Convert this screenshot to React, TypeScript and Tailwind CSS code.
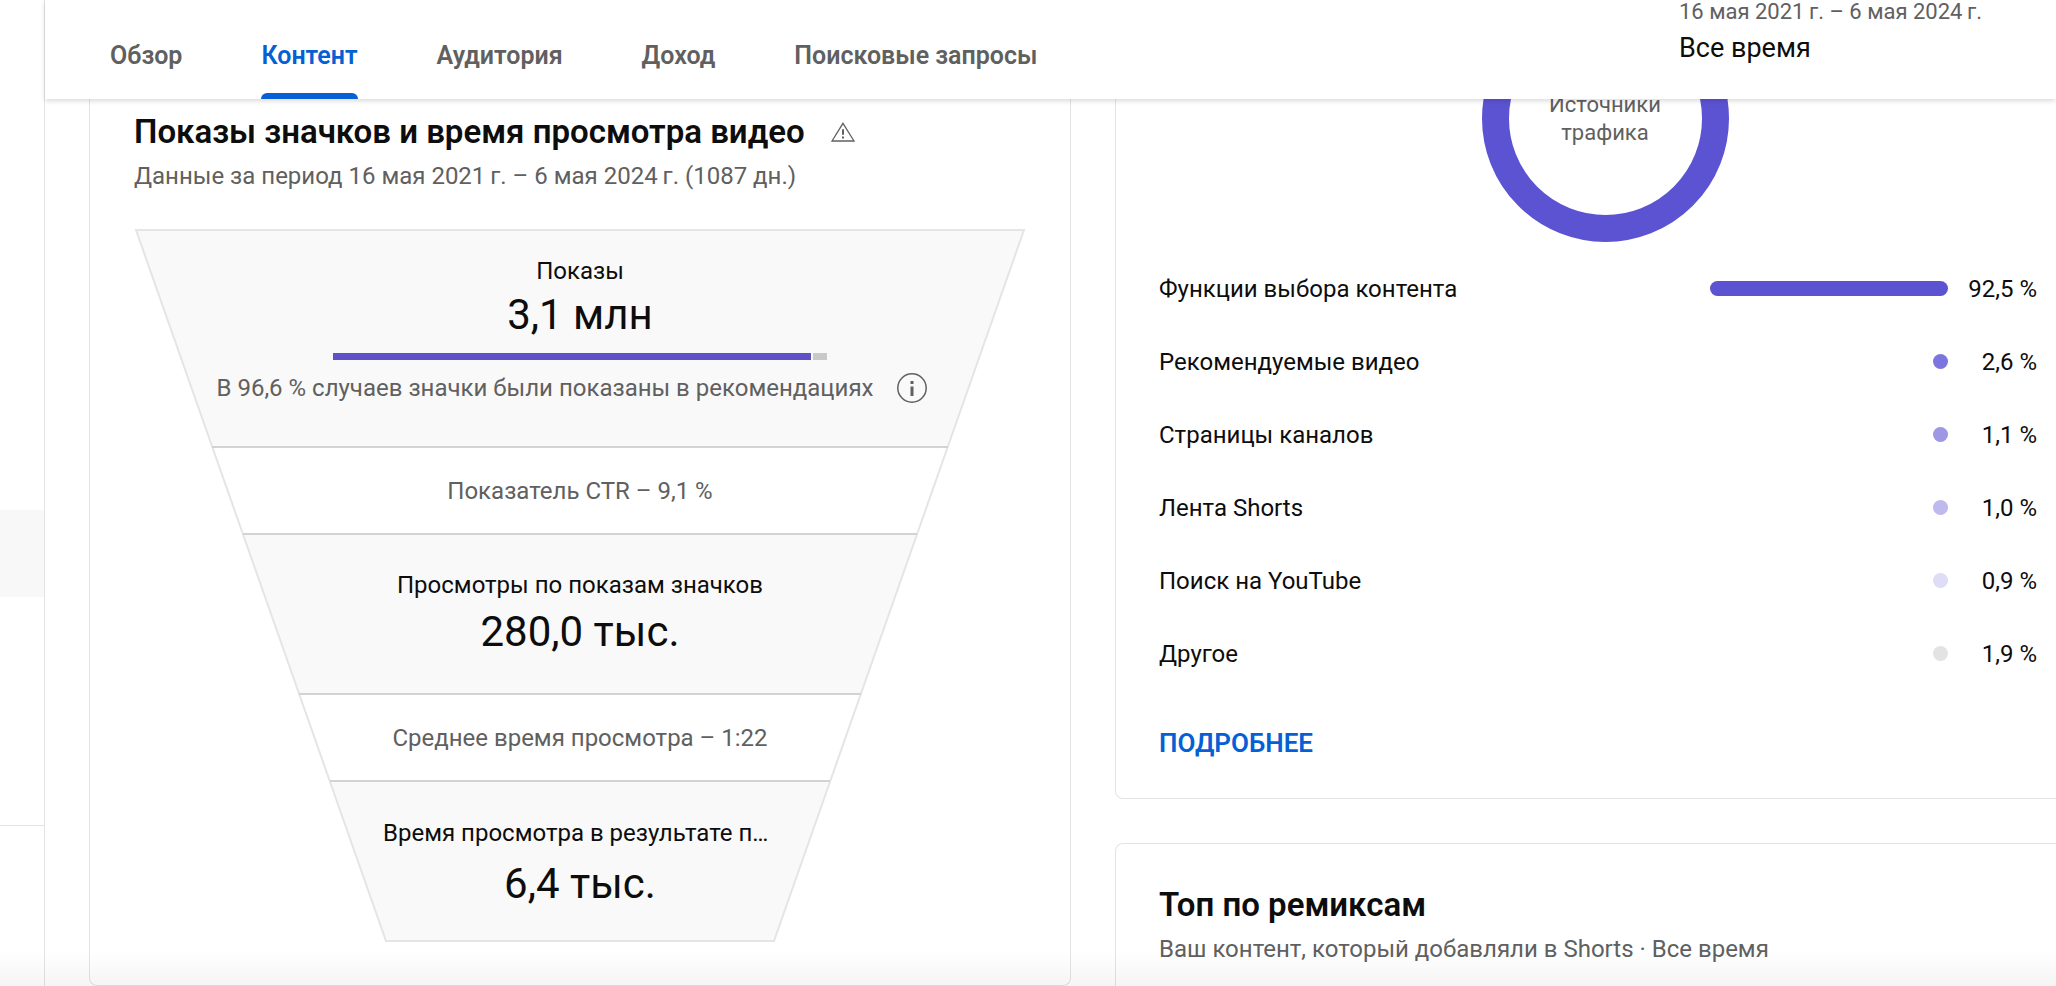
import { useState } from 'react';

const tabs = ['Обзор', 'Контент', 'Аудитория', 'Доход', 'Поисковые запросы'];

const sources = [
    { name: 'Функции выбора контента', value: '92,5 %', bar: 'w-[238px] bg-[#5c53d3]' },
    { name: 'Рекомендуемые видео', value: '2,6 %', bar: 'w-[15px] bg-[#7d75de]' },
    { name: 'Страницы каналов', value: '1,1 %', bar: 'w-[15px] bg-[#9d97e6]' },
    { name: 'Лента Shorts', value: '1,0 %', bar: 'w-[15px] bg-[#bebaee]' },
    { name: 'Поиск на YouTube', value: '0,9 %', bar: 'w-[15px] bg-[#dedcf6]' },
    { name: 'Другое', value: '1,9 %', bar: 'w-[15px] bg-[#e3e3e3]' },
];

function WarningIcon() {
    return (
        <svg className="w-6 h-5" viewBox="0 0 24 20" fill="none" stroke="#606060">
            <path strokeWidth="1.3" d="M12 1.3L23 19H1L12 1.3z" />
            <path strokeWidth="2" d="M12 7.2v5.6M12 14.4v2" />
        </svg>
    );
}

function InfoIcon() {
    return (
        <svg className="w-[30px] h-[30px]" viewBox="0 0 30 30" fill="none" stroke="#606060">
            <circle cx="15" cy="15" r="14.2" strokeWidth="1.5" />
            <path strokeWidth="3" d="M15 13.5V23M15 8v3" />
        </svg>
    );
}

function FunnelShape() {
    return (
        <svg
            className="absolute inset-0 w-full h-full"
            viewBox="0 0 892 713"
            preserveAspectRatio="none"
            fill="none"
            strokeWidth="2"
        >
            <path fill="#f9f9f9" d="M2 1H890L813.6 218H78.4z" />
            <path fill="#f9f9f9" d="M109 305H783L726.7 465H165.3z" />
            <path fill="#f9f9f9" d="M196 552H696L640 712H252z" />
            <path stroke="#e5e5e5" d="M2 1H890L640 712H252z" />
            <path stroke="#d3d3d3" d="M78 218H814M109 305H783M165 465H727M196 552H696" />
        </svg>
    );
}

function Funnel() {
    return (
        <div className="relative mt-[37px]">
            <FunnelShape />
            <div className="relative flex flex-col text-center text-2xl leading-8">
                <div className="h-[218px] pt-[26px] flex flex-col items-center">
                    <p>Показы</p>
                    <p className="mt-1 text-[42px] leading-12">3,1 млн</p>
                    <div className="mt-[14px] w-[494px] h-[7px] flex gap-[2px]">
                        <div className="flex-1 bg-[#5f52c8]" />
                        <div className="w-[14px] bg-[#c9c9c9]" />
                    </div>
                    <div className="mt-3 flex items-center text-[#606060]">
                        <p>В 96,6 % случаев значки были показаны в рекомендациях</p>
                        <button className="ml-6 mr-4" aria-label="Подробнее о показах">
                            <InfoIcon />
                        </button>
                    </div>
                </div>
                <p className="h-[87px] flex items-center justify-center text-[#606060]">Показатель CTR – 9,1 %</p>
                <div className="h-[160px] pt-[35px]">
                    <p>Просмотры по показам значков</p>
                    <p className="mt-[7px] text-[42px] leading-12">280,0 тыс.</p>
                </div>
                <p className="h-[87px] flex items-center justify-center text-[#606060]">
                    Среднее время просмотра – 1:22
                </p>
                <div className="h-[161px] pt-9">
                    <p className="mx-auto w-[394px] text-left">Время просмотра в результате п…</p>
                    <p className="mt-[11px] text-[42px] leading-12">6,4 тыс.</p>
                </div>
            </div>
        </div>
    );
}

function Donut() {
    return (
        <div className="-mt-26 -mr-[14px] flex justify-center">
            <div className="relative w-[247px] h-[247px] flex items-center justify-center">
                <svg className="absolute inset-0 w-full h-full" viewBox="0 0 247 247" fill="none">
                    <circle cx="123.5" cy="123.5" r="110" stroke="#5c53d3" strokeWidth="27" />
                </svg>
                <p className="relative text-[22px] leading-7 text-center text-[#606060]">
                    Источники
                    <br />
                    трафика
                </p>
            </div>
        </div>
    );
}

export default function App() {
    const [activeTab, setActiveTab] = useState('Контент');

    return (
        <div className="relative flex h-screen overflow-hidden bg-white text-[#0d0d0d] font-[Roboto,sans-serif]">
            <aside className="w-[45px] shrink-0 border-r border-[#e3e3e3] flex flex-col">
                <div className="mt-[510px] h-[87px] bg-[#f8f8f8]" />
                <div className="mt-[228px] border-t border-[#e3e3e3]" />
            </aside>

            <div className="flex-1 min-w-0 flex flex-col">
                <header className="relative z-10 h-[99px] shrink-0 flex justify-between bg-white shadow-[0_2px_5px_rgba(0,0,0,0.15)]">
                    <nav className="flex gap-[79px] pl-[65px]">
                        {tabs.map((tab) => (
                            <button
                                key={tab}
                                onClick={() => setActiveTab(tab)}
                                className={
                                    tab === activeTab
                                        ? 'flex flex-col text-[25px] leading-9 font-semibold text-[#065fd4]'
                                        : 'flex flex-col text-[25px] leading-9 font-semibold text-[#606060]'
                                }
                            >
                                <span className="pt-[38px]">{tab}</span>
                                {tab === activeTab && (
                                    <span className="mt-auto w-full h-[6px] rounded-t-md bg-[#065fd4]" />
                                )}
                            </button>
                        ))}
                    </nav>
                    <button className="w-[377px] -mt-1 flex flex-col text-left">
                        <span className="text-[22px] leading-8 text-[#606060]">
                            16 мая 2021{'\u2009'}г. – 6 мая 2024{'\u2009'}г.
                        </span>
                        <span className="mt-[2px] text-[27px] leading-9">Все время</span>
                    </button>
                </header>

                <main className="flex-1 min-h-0 overflow-hidden grid grid-cols-[982fr_941fr] gap-11 pl-11">
                    <section className="self-start px-11 pt-[13px] pb-[43px] border border-t-0 border-[#e3e3e3] rounded-b-lg">
                        <div className="flex items-center gap-[26px]">
                            <h2 className="text-[33px] leading-10 font-semibold">Показы значков и время просмотра видео</h2>
                            <WarningIcon />
                        </div>
                        <p className="mt-2 text-2xl leading-8 text-[#606060]">
                            Данные за период 16 мая 2021{'\u2009'}г. – 6 мая 2024{'\u2009'}г. (1087 дн.)
                        </p>
                        <Funnel />
                    </section>

                    <div className="flex flex-col gap-11">
                        <section className="pl-[43px] pr-[19px] pb-[37px] border-l border-b border-[#e3e3e3] rounded-bl-lg">
                            <Donut />
                            <ul className="mt-[10px] text-2xl leading-8">
                                {sources.map((source) => (
                                    <li key={source.name} className="h-[73px] flex items-center">
                                        <span className="flex-1">{source.name}</span>
                                        <span className={`h-[15px] rounded-full ${source.bar}`} />
                                        <span className="w-[89px] text-right">{source.value}</span>
                                    </li>
                                ))}
                            </ul>
                            <a href="#" className="mt-[35px] inline-block text-[26px] leading-9 font-semibold text-[#065fd4]">
                                ПОДРОБНЕЕ
                            </a>
                        </section>
                        <section className="flex-1 pl-[43px] pt-[41px] border-l border-t border-[#e3e3e3] rounded-tl-lg">
                            <h2 className="text-[33px] leading-10 font-semibold">Топ по ремиксам</h2>
                            <p className="mt-2 text-2xl leading-8 text-[#606060]">
                                Ваш контент, который добавляли в Shorts · Все время
                            </p>
                        </section>
                    </div>
                </main>
            </div>

            <div className="pointer-events-none absolute inset-x-0 bottom-0 h-9 bg-linear-to-b from-transparent to-black/4" />
        </div>
    );
}
